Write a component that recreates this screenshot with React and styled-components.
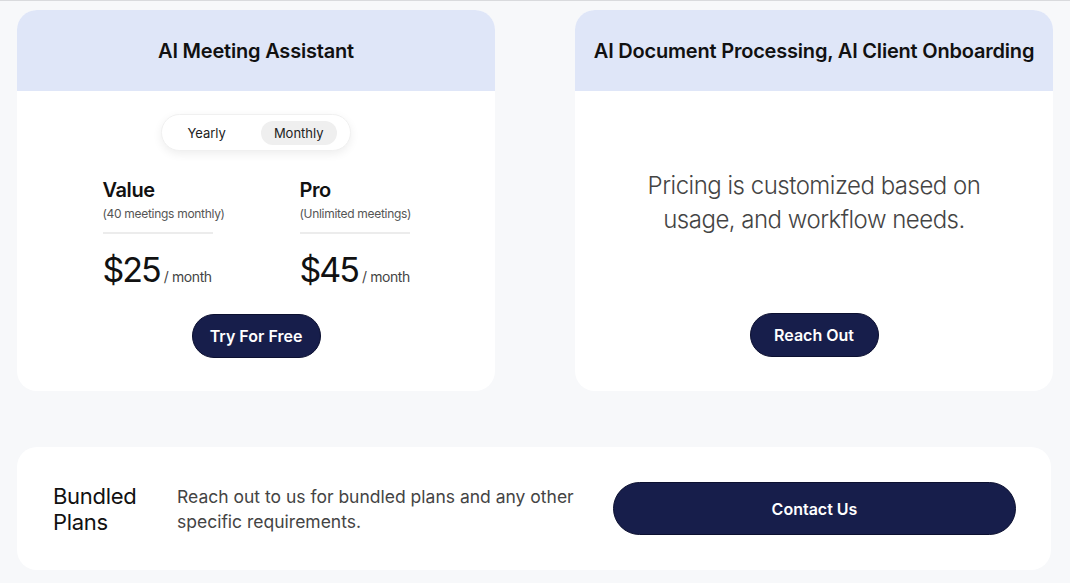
import styled, { createGlobalStyle } from "styled-components";

const GlobalStyle = createGlobalStyle`
    html, body {
        margin: 0;
        padding: 0;
        background-color: #f7f8fa;
        font-family: Inter, "Noto Sans", sans-serif;
    }

    * {
        box-sizing: border-box;
    }
`

const Page = styled.main`
    display: flex;
    flex-direction: column;
    gap: 56px;
    width: 1070px;
    min-height: 583px;
    padding: 9px 19px 0 17px;
    border-top: 1px solid #d9dadd;
`

const CardRow = styled.div`
    display: grid;
    grid-template-columns: 478px 478px;
    gap: 80px;
`

const Card = styled.section`
    display: flex;
    flex-direction: column;
    height: 381px;
    background-color: #ffffff;
    border-radius: 20px;
    overflow: hidden;
`

const CardHeader = styled.header`
    display: flex;
    align-items: center;
    justify-content: center;
    height: 81px;
    background-color: #dfe6f8;

    h2 {
        margin: 0;
        font-size: 20px;
        font-weight: 600;
        letter-spacing: -0.2px;
        color: #111111;
    }
`

const CardBody = styled.div`
    display: flex;
    flex-direction: column;
    align-items: center;
    padding-top: ${({ $top }) => $top}px;
    gap: ${({ $gap }) => $gap}px;
`

const Toggle = styled.div`
    display: flex;
    align-items: center;
    gap: 10px;
    height: 37px;
    padding: 0 13px 0 0;
    border-radius: 999px;
    background-color: #ffffff;
    border: 1px solid #f0f0f0;
    box-shadow: 0 3px 10px rgba(0, 0, 0, 0.07);
`

const ToggleOption = styled.span`
    display: flex;
    align-items: center;
    height: 24px;
    border-radius: 999px;
    font-size: 13px;
    color: #222222;
    background-color: ${({ $active }) => ($active ? "#efefef" : "transparent")};
    padding: ${({ $active }) => ($active ? "0 13px" : "0 25px")};
`

const Plans = styled.div`
    display: flex;
    gap: 87px;
    margin-top: 3px;
`

const Plan = styled.div`
    display: flex;
    flex-direction: column;
    width: 110px;

    h3 {
        margin: 0;
        font-size: 20px;
        line-height: 24px;
        font-weight: 600;
        letter-spacing: -0.4px;
        color: #111111;
    }

    .note {
        margin-top: 4px;
        font-size: 12px;
        letter-spacing: -0.3px;
        color: #555555;
        white-space: nowrap;
    }

    hr {
        width: 100%;
        margin: 11px 0 15px;
        border: none;
        border-top: 2px solid #ececec;
    }
`

const Price = styled.div`
    display: flex;
    align-items: baseline;
    gap: 4px;
    white-space: nowrap;

    strong {
        font-size: 34px;
        font-weight: 400;
        letter-spacing: -2px;
        color: #111111;
    }

    span {
        font-size: 14px;
        letter-spacing: -0.4px;
        color: #444444;
    }
`

const Button = styled.button`
    height: ${({ $tall }) => ($tall ? "53px" : "44px")};
    width: ${({ $wide }) => ($wide ? "403px" : "129px")};
    border-radius: 999px;
    border: 1.5px solid #0c1030;
    background-color: #171e4b;
    color: #ffffff;
    font-family: Inter, sans-serif;
    font-size: 16px;
    font-weight: 600;
    cursor: pointer;
`

const Custom = styled.p`
    margin: 0;
    font-size: 24px;
    line-height: 34px;
    font-weight: 300;
    letter-spacing: -0.5px;
    text-align: center;
    color: #444444;
`

const Bundle = styled.section`
    display: grid;
    grid-template-columns: 100px 412px 403px;
    align-items: center;
    gap: 24px;
    height: 123px;
    width: 1034px;
    padding: 0 35px 0 36px;
    background-color: #ffffff;
    border-radius: 20px;

    h2 {
        margin: 0;
        font-size: 22px;
        line-height: 26px;
        font-weight: 400;
        letter-spacing: -0.3px;
        color: #111111;
    }

    p {
        margin: 0;
        font-size: 17.5px;
        line-height: 25px;
        color: #444444;
    }
`

export default function App() {
    return (
        <>
            <GlobalStyle />
            <Page>
                <CardRow>
                    <Card>
                        <CardHeader><h2>AI Meeting Assistant</h2></CardHeader>
                        <CardBody $top={23} $gap={24}>
                            <Toggle>
                                <ToggleOption>Yearly</ToggleOption>
                                <ToggleOption $active>Monthly</ToggleOption>
                            </Toggle>
                            <Plans>
                                <Plan>
                                    <h3>Value</h3>
                                    <span className="note">(40 meetings monthly)</span>
                                    <hr />
                                    <Price><strong>$25</strong><span>/ month</span></Price>
                                </Plan>
                                <Plan>
                                    <h3>Pro</h3>
                                    <span className="note">(Unlimited meetings)</span>
                                    <hr />
                                    <Price><strong>$45</strong><span>/ month</span></Price>
                                </Plan>
                            </Plans>
                            <Button>Try For Free</Button>
                        </CardBody>
                    </Card>
                    <Card>
                        <CardHeader><h2>AI Document Processing, AI Client Onboarding</h2></CardHeader>
                        <CardBody $top={78} $gap={76}>
                            <Custom>Pricing is customized based on<br />usage, and workflow needs.</Custom>
                            <Button>Reach Out</Button>
                        </CardBody>
                    </Card>
                </CardRow>
                <Bundle>
                    <h2>Bundled Plans</h2>
                    <p>Reach out to us for bundled plans and any other specific requirements.</p>
                    <Button $wide $tall>Contact Us</Button>
                </Bundle>
            </Page>
        </>
    )
}
